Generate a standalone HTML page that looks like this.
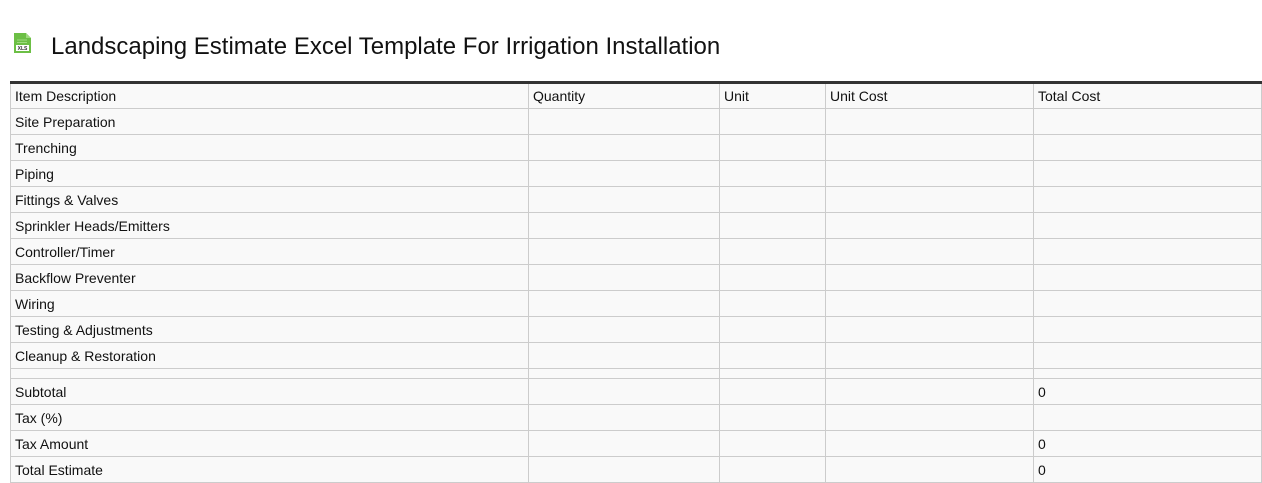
<!DOCTYPE html><html><head><style>
body{margin:0;width:1262px;height:483px;background:#fff;font-family:"Liberation Sans",sans-serif;position:relative;overflow:hidden}
h1{position:absolute;left:51px;top:32px;margin:0;font-weight:normal;font-size:24px;color:#111;line-height:30px}
table{position:absolute;left:10px;top:81px;border-collapse:collapse;width:1252px;border-top:3px solid #333;font-size:14px;color:#111}
td{border:1px solid #ccc;background:#f9f9f9;height:26px;padding:0 0 0 4px;box-sizing:border-box}
tr.e td{height:10px}
</style></head><body>
<svg style="position:absolute;left:13px;top:32px" width="20" height="22" viewBox="0 0 20 22"><path d="M1 1h12l5 5v15H1z" fill="#6cbf45"/><path d="M13 1v5h5" fill="#9ed97f"/><rect x="3" y="13" width="13" height="6" fill="#fff"/><text x="9.5" y="18" font-size="5" text-anchor="middle" font-family="Liberation Sans" font-weight="bold" fill="#333">XLS</text><path d="M4 8h10M4 10.5h10" stroke="#9ed97f"/></svg>
<h1>Landscaping Estimate Excel Template For Irrigation Installation</h1>
<table>
<colgroup><col style="width:518px"><col style="width:191px"><col style="width:106px"><col style="width:208px"><col></colgroup>
<tr><td>Item Description</td><td>Quantity</td><td>Unit</td><td>Unit Cost</td><td>Total Cost</td></tr>
<tr><td>Site Preparation</td><td></td><td></td><td></td><td></td></tr>
<tr><td>Trenching</td><td></td><td></td><td></td><td></td></tr>
<tr><td>Piping</td><td></td><td></td><td></td><td></td></tr>
<tr><td>Fittings &amp; Valves</td><td></td><td></td><td></td><td></td></tr>
<tr><td>Sprinkler Heads/Emitters</td><td></td><td></td><td></td><td></td></tr>
<tr><td>Controller/Timer</td><td></td><td></td><td></td><td></td></tr>
<tr><td>Backflow Preventer</td><td></td><td></td><td></td><td></td></tr>
<tr><td>Wiring</td><td></td><td></td><td></td><td></td></tr>
<tr><td>Testing &amp; Adjustments</td><td></td><td></td><td></td><td></td></tr>
<tr><td>Cleanup &amp; Restoration</td><td></td><td></td><td></td><td></td></tr>
<tr class="e"><td></td><td></td><td></td><td></td><td></td></tr>
<tr><td>Subtotal</td><td></td><td></td><td></td><td>0</td></tr>
<tr><td>Tax (%)</td><td></td><td></td><td></td><td></td></tr>
<tr><td>Tax Amount</td><td></td><td></td><td></td><td>0</td></tr>
<tr><td>Total Estimate</td><td></td><td></td><td></td><td>0</td></tr>
</table>
</body></html>
